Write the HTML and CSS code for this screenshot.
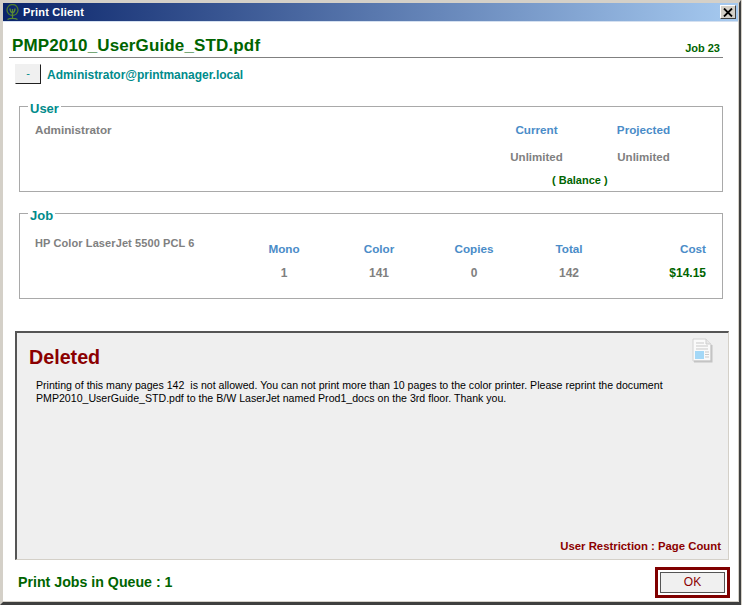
FILE: index.html
```html
<!DOCTYPE html>
<html lang="en">
<head>
<meta charset="utf-8">
<title>Print Client</title>
<link rel="stylesheet" href="styles.css">
</head>
<body>
<div class="window">
  <div class="titlebar">
    <svg class="logo" width="16" height="17" viewBox="0 0 16 17">
      <circle cx="6.500" cy="6" r="5.500" fill="none" stroke="#4f7d2e" stroke-width="1.300"/>
      <path d="M6.500 5v9M4 4.500c0 2.500 1 4 2.500 4.500 1.500-.5 2.500-2 2.500-4.500M1.500 15.500c2-1.500 8-1.500 10 0" fill="none" stroke="#5a8a34" stroke-width="1.300"/>
    </svg>
    <span class="title-text">Print Client</span>
    <button class="close" type="button" aria-label="Close">
      <svg width="10" height="9" viewBox="0 0 10 9"><path d="M1 0.5l8 8M9 0.5l-8 8" stroke="#000" stroke-width="1.8" fill="none"/></svg>
    </button>
  </div>
  <div class="client">
    <div class="doc-head">
      <div class="doc-name">PMP2010_UserGuide_STD.pdf</div>
      <div class="job-no">Job 23</div>
    </div>
    <div class="account">
      <button class="mini-btn" type="button">-</button>
      <span class="email">Administrator@printmanager.local</span>
    </div>
    <fieldset class="group user-group">
      <legend>User</legend>
      <div class="user-name">Administrator</div>
      <div class="balance-grid">
        <div class="lbl">Current</div><div class="lbl">Projected</div>
        <div class="val unl">Unlimited</div><div class="val unl">Unlimited</div>
        <div class="balance">( Balance )</div>
      </div>
    </fieldset>
    <fieldset class="group job-group">
      <legend>Job</legend>
      <div class="printer">HP Color LaserJet 5500 PCL 6</div>
      <div class="job-grid">
        <div class="lbl">Mono</div><div class="lbl">Color</div><div class="lbl">Copies</div><div class="lbl">Total</div><div class="lbl right">Cost</div>
        <div class="val">1</div><div class="val">141</div><div class="val">0</div><div class="val">142</div><div class="val right cost">$14.15</div>
      </div>
    </fieldset>
    <section class="panel">
      <svg class="doc-icon" width="22" height="25" viewBox="0 0 22 25">
        <path d="M2 1h13l5 5v17H2z" fill="#fafafa" stroke="#d2d2d2"/>
        <path d="M15 1v5h5" fill="#e8e8e8" stroke="#cfcfcf"/>
        <path d="M20.500 7v16.500H3" fill="none" stroke="#c4c4c4" stroke-width="2"/>
        <path d="M5 5h8M5 8h12M5 11h12M14 14h4M14 16.500h4M14 19h4" stroke="#c9c9c9"/>
        <rect x="4" y="13" width="9" height="8" fill="#a4d8f7"/>
      </svg>
      <h1 class="status">Deleted</h1>
      <p class="message">Printing of this many pages 142&nbsp; is not allowed. You can not print more than 10 pages to the color printer. Please reprint the document PMP2010_UserGuide_STD.pdf to the B/W LaserJet named Prod1_docs on the 3rd floor. Thank you.</p>
      <div class="reason">User Restriction : Page Count</div>
    </section>
    <div class="footer">
      <span class="queue">Print Jobs in Queue : 1</span>
      <div class="ok-wrap"><button class="ok" type="button">OK</button></div>
    </div>
  </div>
</div>
</body>
</html>
```
FILE: styles.css
```css
* { box-sizing: border-box; }
html, body { margin: 0; padding: 0; }
body { width: 742px; height: 605px; overflow: hidden; background: #d4d0c8; font-family: "Liberation Sans", Arial, sans-serif; }
.window {
  width: 741px; height: 605px; display: flex; flex-direction: column; background: #fff;
  border-style: solid; border-width: 3px 2px 3px 3px;
  border-color: #d4d0c8 #3f3f3f #3f3f3f #d4d0c8;
  box-shadow: inset -1px -1px 0 #d4d0c8;
}
.titlebar {
  height: 19px; flex: none; display: flex; align-items: center;
  margin-right: 1px; padding: 0 2px 0 3px;
  background: linear-gradient(90deg, #0a246a 0%, #a6caf0 100%);
  border-bottom: 1px solid #d4e0f0;
}
.logo { flex: none; margin-right: 1px; }
.title-text { color: #fff; font: bold 11px "Liberation Sans", Arial, sans-serif; letter-spacing: 0.2px; }
.close {
  margin-left: auto; width: 16px; height: 14px; padding: 0; display: flex; align-items: center; justify-content: center;
  background: #d4d0c8; border: 1px solid; border-color: #fff #404040 #404040 #fff;
}
.client { flex: 1; min-height: 0; display: flex; flex-direction: column; padding: 0 9px 0 6px; border-right: 1px solid #d4d0c8; }
.doc-head {
  display: flex; flex: none; justify-content: space-between; align-items: flex-end;
  height: 36px; margin-right: 6px; padding: 0 3px; border-bottom: 1px solid #808080;
}
.doc-name { color: #006400; font-size: 17px; font-weight: bold; line-height: 20px; margin-bottom: 1px; letter-spacing: 0.14px; }
.job-no { color: #006400; font-size: 11px; font-weight: bold; line-height: 13px; margin-bottom: 2px; }
.account { display: flex; flex: none; align-items: center; height: 20px; margin: 6px 0 22px 6px; }
.mini-btn {
  width: 26px; height: 20px; padding: 0 0 2px; margin-right: 6px; color: #008b8b; font: 11px "Liberation Sans", Arial, sans-serif;
  background: #f0f0f0; border: 1px solid; border-color: #f0f0f0 #202020 #202020 #f0f0f0;
}
.email { color: #008b8b; font-size: 12px; font-weight: bold; letter-spacing: -0.03px; padding-top: 2px; }
.group {
  position: relative; flex: none; margin: 0 6px 21px 10px; padding: 0; min-width: 0; height: 86px;
  border: 1px solid #a9a9a9; display: block;
}
.group legend { position: absolute; top: -6px; left: 8px; padding: 0 2px; background: #fff; color: #008b8b; font-size: 13px; font-weight: bold; line-height: 16px; }
.user-name, .printer { position: absolute; left: 15px; color: #808080; font-size: 11px; font-weight: bold; line-height: 13px; }
.user-name { top: 16px; font-size: 11.700px; }
.printer { top: 23px; letter-spacing: 0.1px; }
.lbl { color: #4a8cc8; font-size: 11.700px; font-weight: bold; line-height: 13px; text-align: center; }
.val { color: #808080; font-size: 12px; font-weight: bold; line-height: 14px; text-align: center; }
.unl { font-size: 11.500px; }
.right { text-align: right; }
.balance-grid {
  position: absolute; top: 16px; left: 463px; display: grid; grid-template-columns: 107px 107px; row-gap: 14px;
}
.balance { grid-column: 1 / 3; color: #006400; font-size: 11px; font-weight: bold; line-height: 13px; margin: -4px 0 0 69px; }
.job-grid {
  position: absolute; top: 28px; right: 16px; display: grid;
  grid-template-columns: 95px 95px 95px 95px 89.500px; row-gap: 11px;
}
.cost { color: #006400; }
.panel {
  position: relative; margin: 11px 0 0 6px; height: 229px; padding: 13px 13px 0 12px; flex: none;
  background: #efefef; border-style: solid; border-width: 2px 1px 1px 2px; border-color: #555 #d4d0c8 #d4d0c8 #555;
}
.doc-icon { position: absolute; top: 5px; right: 15px; }
.status { margin: 0 0 10px; color: #8b0000; font-size: 19.700px; font-weight: bold; line-height: 23px; }
.message { margin: 0 0 0 7px; width: 650px; color: #000; font-size: 10.600px; line-height: 13px; }
.reason { position: absolute; right: 7px; bottom: 6px; color: #8b0000; font-size: 11.350px; font-weight: bold; line-height: 13px; }
.footer { flex: 1; display: flex; justify-content: space-between; align-items: center; padding: 2px 0 0 9px; margin-right: -1px; }
.queue { color: #006400; font-size: 14.200px; font-weight: bold; }
.ok-wrap { width: 75px; height: 31px; padding: 2px; border: 3px solid #800000; }
.ok { display: block; width: 100%; height: 100%; padding: 0; background: #f0f0f0; border: 1px solid #555; color: #8b0000; font: 12px "Liberation Sans", Arial, sans-serif; }
```
